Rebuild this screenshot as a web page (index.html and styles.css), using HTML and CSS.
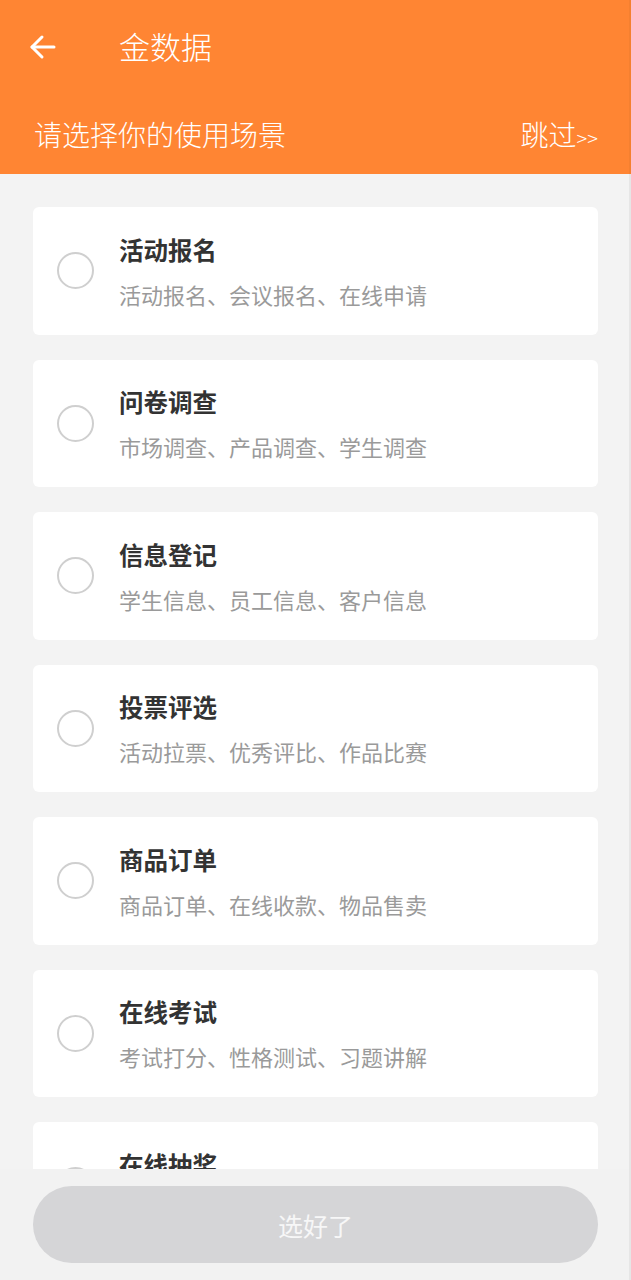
FILE: index.html
```html
<!DOCTYPE html>
<html lang="zh-CN">
<head>
    <meta charset="UTF-8">
    <meta name="viewport" content="width=device-width, initial-scale=1.0">
    <title>金数据</title>
    <link rel="stylesheet" href="styles.css">
</head>
<body>
    <div class="page">
        <div class="header">
            <div class="top-bar">
                <span class="back">
                    <svg width="28" height="28" viewBox="0 0 28 28" fill="none" stroke="#fff" stroke-width="3" stroke-linecap="round" stroke-linejoin="round">
                        <path d="M25 14H3"/>
                        <path d="M13 4L3 14l10 10"/>
                    </svg>
                </span>
                <span class="title">金数据</span>
            </div>
            <div class="sub-bar">
                <span class="prompt">请选择你的使用场景</span>
                <span class="skip">跳过<small>&gt;&gt;</small></span>
            </div>
        </div>

        <div class="list">
            <div class="card">
                <span class="radio"></span>
                <div class="info">
                    <div class="name">活动报名</div>
                    <div class="desc">活动报名、会议报名、在线申请</div>
                </div>
            </div>
            <div class="card">
                <span class="radio"></span>
                <div class="info">
                    <div class="name">问卷调查</div>
                    <div class="desc">市场调查、产品调查、学生调查</div>
                </div>
            </div>
            <div class="card">
                <span class="radio"></span>
                <div class="info">
                    <div class="name">信息登记</div>
                    <div class="desc">学生信息、员工信息、客户信息</div>
                </div>
            </div>
            <div class="card">
                <span class="radio"></span>
                <div class="info">
                    <div class="name">投票评选</div>
                    <div class="desc">活动拉票、优秀评比、作品比赛</div>
                </div>
            </div>
            <div class="card">
                <span class="radio"></span>
                <div class="info">
                    <div class="name">商品订单</div>
                    <div class="desc">商品订单、在线收款、物品售卖</div>
                </div>
            </div>
            <div class="card">
                <span class="radio"></span>
                <div class="info">
                    <div class="name">在线考试</div>
                    <div class="desc">考试打分、性格测试、习题讲解</div>
                </div>
            </div>
            <div class="card">
                <span class="radio"></span>
                <div class="info">
                    <div class="name">在线抽奖</div>
                    <div class="desc">抽奖活动、幸运转盘、红包抽奖</div>
                </div>
            </div>
        </div>

        <div class="footer">
            <button class="done" disabled>选好了</button>
        </div>
    </div>
</body>
</html>
```

FILE: styles.css
```css
* {
    box-sizing: border-box;
}
body {
    margin: 0;
    font-family: "Noto Sans CJK SC", "Noto Sans", sans-serif;
    background-color: #f3f3f3;
}
.page {
    height: 1280px;
    display: flex;
    flex-direction: column;
    overflow: hidden;
}
.header {
    background-color: #ff8533;
    color: #fff;
    flex-shrink: 0;
    box-shadow: inset -2px 0 #f58030;
}
.top-bar {
    height: 94px;
    display: flex;
    align-items: center;
    padding-left: 29px;
}
.back {
    display: flex;
    width: 28px;
    height: 28px;
}
.title {
    font-size: 31px;
    font-weight: 300;
    margin-left: 62px;
    line-height: 1;
    margin-top: -3px;
}
.sub-bar {
    height: 80px;
    display: flex;
    align-items: center;
    justify-content: space-between;
    padding: 0 33px 0 34px;
}
.prompt {
    font-size: 28px;
    font-weight: 300;
    line-height: 1;
}
.skip {
    font-size: 28px;
    font-weight: 300;
    line-height: 1;
}
.skip small {
    font-size: 20px;
}
.list {
    flex: 1;
    overflow: hidden;
    padding: 33px 33px 0 33px;
    box-shadow: inset -2px 0 #e6e6e6;
}
.card {
    background-color: #fff;
    border-radius: 6px;
    height: 127.5px;
    margin-bottom: 25px;
    display: flex;
    align-items: center;
    padding-left: 24px;
}
.radio {
    width: 37px;
    height: 37px;
    border: 2px solid #cfcfcf;
    border-radius: 50%;
    flex-shrink: 0;
}
.info {
    margin-left: 25px;
}
.name {
    font-size: 24.5px;
    font-weight: bold;
    color: #333;
    line-height: 34px;
    margin-bottom: 12px;
}
.desc {
    font-size: 22px;
    color: #9a9a9a;
    line-height: 30px;
}
.footer {
    height: 111px;
    flex-shrink: 0;
    padding: 17px 33px;
    background-color: #f2f2f2;
    box-shadow: inset -2px 0 #e6e6e6;
}
.done {
    width: 100%;
    height: 77px;
    border: none;
    border-radius: 39px;
    background-color: #d5d5d7;
    color: #f7f7f7;
    font-family: inherit;
    font-size: 25px;
}
```
